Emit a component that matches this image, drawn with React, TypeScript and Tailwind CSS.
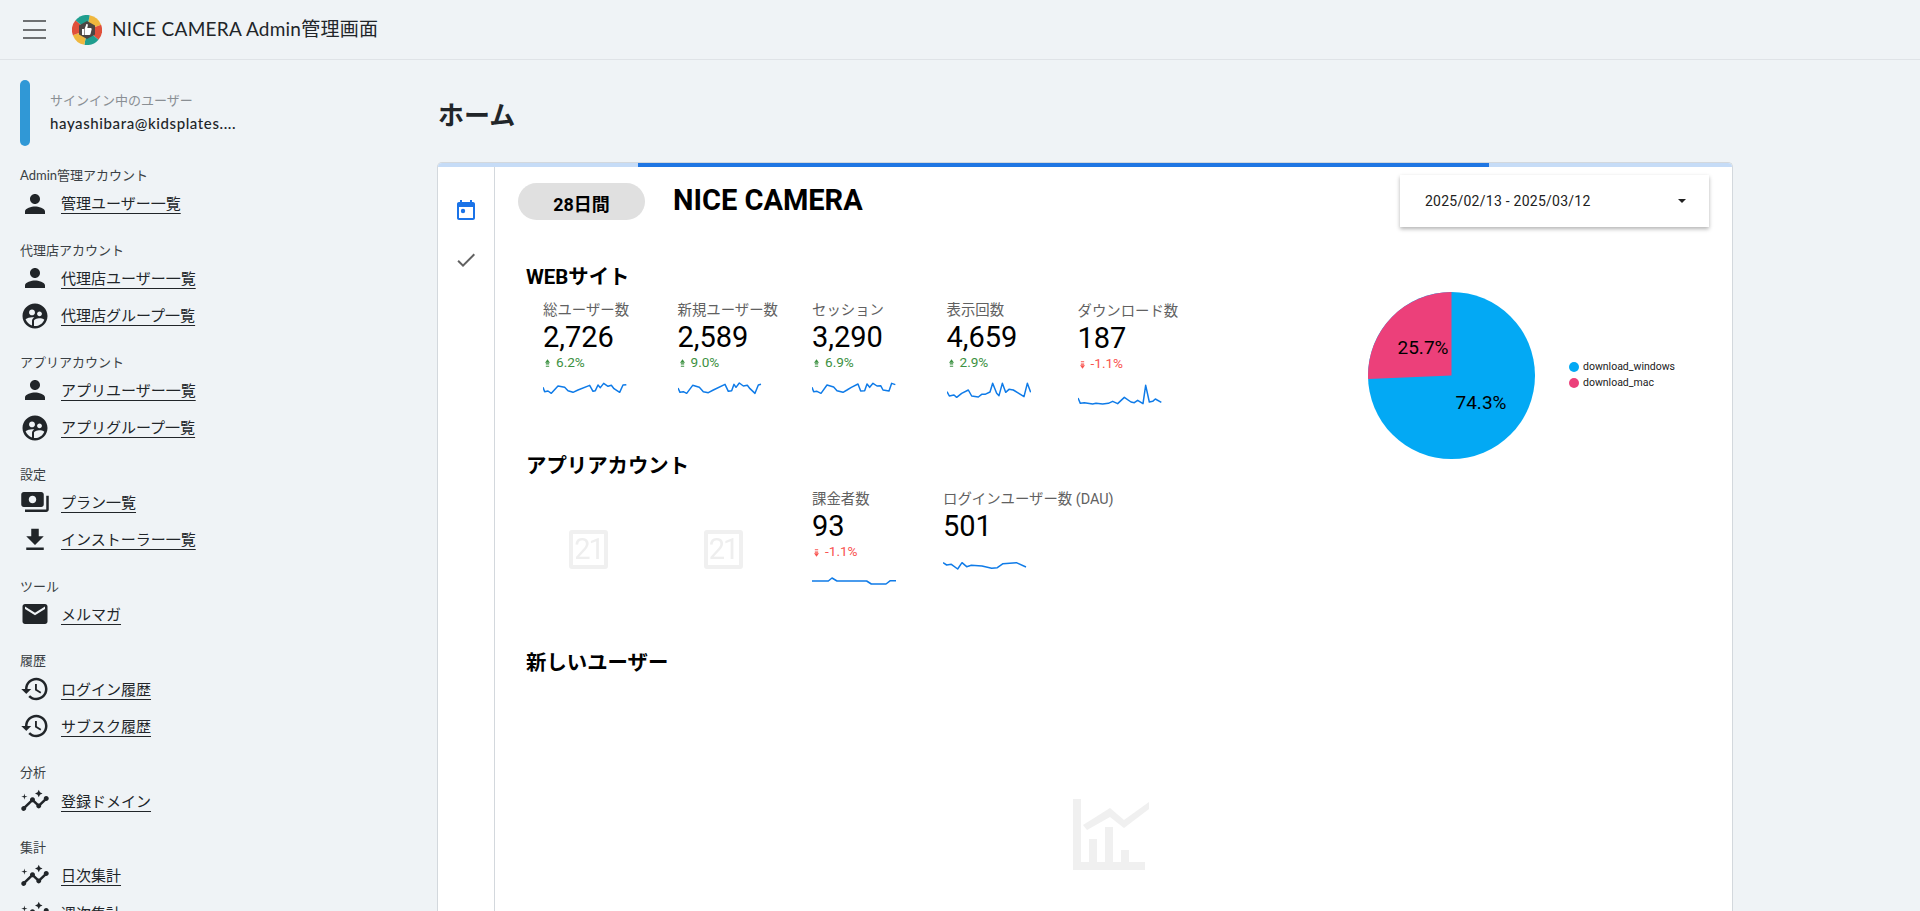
import React from "react";

const ICONS: Record<string, string> = {
  person:
    "M12 12c2.21 0 4-1.79 4-4s-1.79-4-4-4-4 1.79-4 4 1.79 4 4 4zm0 2c-2.67 0-8 1.34-8 4v2h16v-2c0-2.66-5.33-4-8-4z",
  group:
    "M12 2C6.48 2 2 6.48 2 12s4.48 10 10 10 10-4.48 10-10S17.52 2 12 2zm3.61 6.34c1.07 0 1.93.86 1.93 1.93 0 1.07-.86 1.93-1.93 1.93-1.07 0-1.93-.86-1.93-1.93-.01-1.07.86-1.93 1.93-1.93zm-6-1.58c1.3 0 2.36 1.06 2.36 2.36 0 1.3-1.06 2.36-2.36 2.36s-2.36-1.06-2.36-2.36c0-1.31 1.05-2.36 2.36-2.36zm0 9.13v3.75c-2.4-.75-4.3-2.6-5.14-4.96 1.05-1.12 3.67-1.69 5.14-1.69.53 0 1.2.08 1.9.22-1.64.87-1.9 2.02-1.9 2.68zM11.99 20c-.27 0-.53-.01-.79-.04v-4.07c0-1.42 2.94-2.13 4.4-2.13 1.07 0 2.92.39 3.84 1.15-1.17 2.97-4.06 5.09-7.45 5.09z",
  payments:
    "M19 14V6c0-1.1-.9-2-2-2H3c-1.1 0-2 .9-2 2v8c0 1.1.9 2 2 2h14c1.1 0 2-.9 2-2zm-9-1c-1.66 0-3-1.34-3-3s1.34-3 3-3 3 1.34 3 3-1.34 3-3 3zm13-6v11c0 1.1-.9 2-2 2H4v-2h17V7h2z",
  download: "M19 9h-4V3H9v6H5l7 7 7-7zM5 18v2h14v-2H5z",
  mail: "M20 4H4c-1.1 0-1.99.9-1.99 2L2 18c0 1.1.9 2 2 2h16c1.1 0 2-.9 2-2V6c0-1.1-.9-2-2-2zm0 4l-8 5-8-5V6l8 5 8-5v2z",
  history:
    "M13 3c-4.97 0-9 4.03-9 9H1l3.89 3.89.07.14L9 12H6c0-3.87 3.13-7 7-7s7 3.13 7 7-3.13 7-7 7c-1.93 0-3.68-.79-4.94-2.06l-1.42 1.42C8.27 19.99 10.51 21 13 21c4.97 0 9-4.03 9-9s-4.03-9-9-9zm-1 5v5l4.28 2.54.72-1.21-3.5-2.08V8H12z",
  insights:
    "M21 8c-1.45 0-2.26 1.44-1.93 2.51l-3.55 3.56c-.3-.09-.74-.09-1.04 0l-2.55-2.55C12.27 10.45 11.46 9 10 9c-1.45 0-2.27 1.44-1.93 2.52l-4.56 4.55C2.44 15.74 1 16.55 1 18c0 1.1.9 2 2 2 1.45 0 2.26-1.44 1.93-2.51l4.55-4.56c.3.09.74.09 1.04 0l2.55 2.55C12.73 16.55 13.54 18 15 18c1.45 0 2.27-1.44 1.93-2.52l3.56-3.55c1.07.33 2.51-.48 2.51-1.93 0-1.1-.9-2-2-2zM15 9l.94-2.07L18 6l-2.06-.93L15 3l-.92 2.07L12 6l2.08.93zM3.5 11L4 9l2-.5L4 8l-.5-2L3 8l-2 .5L3 9z",
};

const MENU = [
  { title: "Admin管理アカウント", items: [{ icon: "person", label: "管理ユーザー一覧" }] },
  {
    title: "代理店アカウント",
    items: [
      { icon: "person", label: "代理店ユーザー一覧" },
      { icon: "group", label: "代理店グループ一覧" },
    ],
  },
  {
    title: "アプリアカウント",
    items: [
      { icon: "person", label: "アプリユーザー一覧" },
      { icon: "group", label: "アプリグループ一覧" },
    ],
  },
  {
    title: "設定",
    items: [
      { icon: "payments", label: "プラン一覧" },
      { icon: "download", label: "インストーラー一覧" },
    ],
  },
  { title: "ツール", items: [{ icon: "mail", label: "メルマガ" }] },
  {
    title: "履歴",
    items: [
      { icon: "history", label: "ログイン履歴" },
      { icon: "history", label: "サブスク履歴" },
    ],
  },
  { title: "分析", items: [{ icon: "insights", label: "登録ドメイン" }] },
  {
    title: "集計",
    items: [
      { icon: "insights", label: "日次集計" },
      { icon: "insights", label: "週次集計" },
    ],
  },
];

// sparkline points, in 1/3 px units (viewBox 252x90)
const SPARK = {
  users:
    "0,37 5,50 15,48 25,55 45,33 65,37 75,47 90,52 105,45 140,31 150,49 157,47 165,30 172,38 182,25 195,34 205,31 213,41 230,52 240,30 250,29",
  newUsers:
    "0,39 6,52 16,50 26,55 44,31 64,37 76,50 91,53 106,45 141,28 151,49 161,47 168,28 174,37 184,24 196,33 208,31 216,41 231,55 241,30 249,28",
  sessions:
    "0,37 5,50 15,49 27,55 45,30 65,36 75,47 93,52 105,45 118,37 138,27 146,48 158,47 165,27 173,37 183,25 195,33 206,32 213,45 231,48 239,25 250,29",
  views:
    "0,50 7,63 21,60 29,67 44,55 64,45 74,63 94,66 104,58 114,58 129,51 137,25 149,55 156,62 166,25 176,52 186,43 199,45 231,65 241,25 251,52",
  downloads:
    "0,66 7,82 19,80 44,84 54,82 74,84 91,82 104,76 119,83 139,64 159,78 169,80 179,73 195,83 203,28 214,78 224,76 232,69 250,79",
  paid: "0,51 49,51 60,42 75,51 164,51 178,60 222,60 235,50 252,50",
  dau: "0,44 11,51 25,49 44,63 57,44 71,56 85,52 117,54 146,61 163,59 180,47 220,44 249,57",
};

const NavIcon = ({ name }: { name: string }) => (
  <svg viewBox="0 0 24 24" className="h-[30px] w-[30px] shrink-0 fill-[#212529]">
    <path d={ICONS[name]} />
  </svg>
);

const Logo = () => {
  const colors = ["#efb73e", "#e0503b", "#1f9e8f", "#efb73e", "#e0503b", "#1f9e8f"];
  const wedge = (i: number) => {
    const a = ((-80 + i * 60) * Math.PI) / 180;
    const b = ((-20 + i * 60) * Math.PI) / 180;
    return `M15 15L${15 + 15 * Math.cos(a)} ${15 + 15 * Math.sin(a)}A15 15 0 0 1 ${15 + 15 * Math.cos(b)} ${15 + 15 * Math.sin(b)}Z`;
  };
  return (
    <svg viewBox="0 0 30 30" className="h-[30px] w-[30px] shrink-0">
      {colors.map((c, i) => (
        <path key={i} d={wedge(i)} fill={c} />
      ))}
      <polygon points="15,6 23,10.5 23,19.5 15,24 7,19.5 7,10.5" fill="#4b4644" />
      <path
        d="M10 14h2v6h-2zM12.6 14l1.8-5c.9-.4 1.7.3 1.4 1.4l-.5 2.6h3.2c.9 0 1.3.7 1.1 1.4l-1.1 4.7c-.2.6-.6.9-1.2.9h-4.7z"
        fill="#ffffff"
      />
    </svg>
  );
};

const Spark = ({ points }: { points: string }) => (
  <svg viewBox="0 0 252 90" className="mt-[5px] h-[30px] w-[84px]">
    <polyline points={points} fill="none" stroke="#0f7be8" strokeWidth="4.5" strokeLinejoin="round" />
  </svg>
);

const Delta = ({ value, up }: { value: string; up: boolean }) => (
  <div className={`flex h-4 items-center gap-[6px] text-[13.6px] ${up ? "text-[#3d9142]" : "text-[#f9534f]"}`}>
    <svg viewBox="0 0 6 10" className="mt-[2px] ml-[2px] h-[9px] w-[5px] fill-current">
      {up ? (
        <path d="M3 0l3 4H0zM1 4.6h4v1H1zM1 6.2h4v1H1zM1 7.9h4v1H1z" />
      ) : (
        <path d="M3 10l3-4H0zM1 5.4h4v-1H1zM1 3.8h4v-1H1zM1 2.1h4v-1H1z" />
      )}
    </svg>
    {value}
  </div>
);

const Metric = ({
  label,
  value,
  delta,
  up,
  points,
  className,
}: {
  label: string;
  value: string;
  delta?: string;
  up?: boolean;
  points: string;
  className: string;
}) => (
  <div className={className}>
    <div className="h-5 text-[14.4px] leading-[22px] whitespace-nowrap text-[#616161]">{label}</div>
    <div className="h-[34px] text-[29px] leading-[34px] text-black">{value}</div>
    {delta && <Delta value={delta} up={!!up} />}
    <Spark points={points} />
  </div>
);

const CalendarSkeleton = () => (
  <div className="w-[134.5px]">
    <div className="mt-[41px] ml-[26px] flex h-[39px] w-[39px] items-center justify-center rounded-[3px] border-4 border-[#f0f0f0] text-[29px] tracking-[-2px] text-[#eeeeee] blur-[0.6px]">
      21
    </div>
  </div>
);

const Section = ({ children, className }: { children: React.ReactNode; className: string }) => (
  <h2 className={`h-7 text-[20.4px] leading-7 font-bold text-black ${className}`}>{children}</h2>
);

const App = () => {
  return (
    <div className="flex h-screen flex-col overflow-hidden bg-[#eff3f6] font-['Lato','Noto_Sans_CJK_JP',sans-serif] text-[#212529]">
      {/* ヘッダー */}
      <header className="flex h-[60px] shrink-0 items-center border-b border-[#dfe3e7] pl-[23px]">
        <div className="flex w-[23px] flex-col gap-[6.5px]">
          <span className="h-[2px] bg-[#6e7072]" />
          <span className="h-[2px] bg-[#6e7072]" />
          <span className="h-[2px] bg-[#6e7072]" />
        </div>
        <div className="ml-[26px]">
          <Logo />
        </div>
        <span className="ml-[10px] text-[19px] tracking-[0.25px] whitespace-nowrap text-[#212529]">
          NICE CAMERA Admin管理画面
        </span>
      </header>

      <div className="flex min-h-0 flex-1">
        {/* サイドバー */}
        <aside className="w-[437px] shrink-0 overflow-hidden pt-5 pl-5">
          <div className="flex h-[66px] items-stretch">
            <div className="w-[10px] rounded-[5px] bg-[#3098d6]" />
            <div className="ml-5 pt-[11px]">
              <div className="h-[18px] text-[13px] leading-[18px] text-[#8a8f94]">サインイン中のユーザー</div>
              <div className="mt-[4px] h-5 text-[15px] leading-5 font-medium tracking-[0.6px] text-[#212529]">
                hayashibara@kidsplates....
              </div>
            </div>
          </div>
          <nav className="mt-[19px]">
            {MENU.map((section) => (
              <div key={section.title} className="pb-[17.33px]">
                <div className="h-5 text-[13px] leading-5 text-[#3a3f44]">{section.title}</div>
                {section.items.map((item) => (
                  <a key={item.label} href="#" className="flex h-[37.33px] items-center">
                    <NavIcon name={item.icon} />
                    <span className="ml-[11px] text-[15px] underline underline-offset-[4px]">{item.label}</span>
                  </a>
                ))}
              </div>
            ))}
          </nav>
        </aside>

        {/* メイン */}
        <main className="flex min-w-0 flex-1 flex-col pt-[35px] pr-[187px] font-['Roboto','Noto_Sans_CJK_JP',sans-serif]">
          <h1 className="ml-px h-10 text-[26px] leading-[42px] font-bold text-[#212529]">ホーム</h1>
          <div className="mt-[27px] flex-1 overflow-hidden rounded-t-[5px] border-x border-t border-[#d3d8dd] bg-white">
            <div className="h-1 bg-[#c6dcf7] px-[200px]">
              <div className="h-1 w-[851px] bg-[#1f76e3]" />
            </div>
            <div className="flex h-full">
              {/* 左のレール */}
              <div className="flex w-[57px] shrink-0 flex-col items-center gap-[25px] border-r border-[#d3d8dd] pt-[32px]">
                <svg viewBox="0 0 24 24" className="h-6 w-6 fill-[#1a73e8]">
                  <path d="M19 3h-1V1h-2v2H8V1H6v2H5c-1.11 0-1.99.9-1.99 2L3 19c0 1.1.89 2 2 2h14c1.1 0 2-.9 2-2V5c0-1.1-.9-2-2-2zm0 16H5V8h14v11z" />
                  <circle cx="9" cy="12" r="2.2" />
                </svg>
                <svg viewBox="0 0 24 24" className="h-6 w-6 fill-[#616161]">
                  <path d="M9 16.17L4.83 12l-1.42 1.41L9 19 21 7l-1.41-1.41z" />
                </svg>
              </div>

              <div className="min-w-0 flex-1">
                {/* 上部 */}
                <div className="flex items-start pt-2 pr-[23px] pl-[23px]">
                  <div className="mt-2 flex h-[37px] w-[127px] items-center justify-center rounded-full bg-[#e0e0e0] pt-[5px] text-[18px] font-bold text-black">
                    28日間
                  </div>
                  <div className="mt-2 ml-7 text-[29px] leading-[34px] font-bold text-black">NICE CAMERA</div>
                  <div className="ml-auto flex h-[52px] w-[309px] items-center justify-between bg-white pr-[23px] pl-[25px] text-[14px] tracking-[0.25px] text-[#212121] shadow-[0_2px_4px_rgba(0,0,0,0.3)]">
                    2025/02/13 - 2025/03/12
                    <span className="h-0 w-0 border-x-4 border-t-4 border-x-transparent border-t-[#212121]" />
                  </div>
                </div>

                <div className="flex">
                  <div className="w-[800px] shrink-0">
                    <Section className="mt-9 ml-[31px]">WEBサイト</Section>
                    <div className="mt-[9px] ml-12 flex">
                      <Metric className="w-[134.5px]" label="総ユーザー数" value="2,726" delta="6.2%" up points={SPARK.users} />
                      <Metric className="w-[134.5px]" label="新規ユーザー数" value="2,589" delta="9.0%" up points={SPARK.newUsers} />
                      <Metric className="w-[134.5px]" label="セッション" value="3,290" delta="6.9%" up points={SPARK.sessions} />
                      <Metric className="w-[131px]" label="表示回数" value="4,659" delta="2.9%" up points={SPARK.views} />
                      <Metric className="pt-px" label="ダウンロード数" value="187" delta="-1.1%" points={SPARK.downloads} />
                    </div>

                    <Section className="mt-[46px] ml-[31px]">アプリアカウント</Section>
                    <div className="mt-[9px] ml-12 flex">
                      <CalendarSkeleton />
                      <CalendarSkeleton />
                      <Metric className="w-[131px]" label="課金者数" value="93" delta="-1.1%" points={SPARK.paid} />
                      <Metric className="" label="ログインユーザー数 (DAU)" value="501" points={SPARK.dau} />
                    </div>

                    <Section className="mt-[55px] ml-[31px]">新しいユーザー</Section>
                    <div className="mt-[122px] ml-[578px]">
                      <svg viewBox="0 0 80 76" className="h-[76px] w-[80px] fill-[#f0f0f0]">
                        <path d="M0 0h8v63h8V40h8v23h8V28h8v35h8V51h8v12h16v8H0z" />
                        <path d="M10 26l27-17 14 12 25-18v7L51 29 37 18 14 31z" />
                      </svg>
                    </div>
                  </div>

                  {/* 円グラフ */}
                  <div className="flex items-start pt-[65px]">
                    <svg viewBox="0 0 167 167" className="ml-[73px] h-[167px] w-[167px]">
                      <circle cx="83.5" cy="83.5" r="83.5" fill="#03a9f4" />
                      <path d="M83.5 83.5L83.5 0A83.5 83.5 0 0 0 .1 87.1Z" fill="#ec407a" />
                      <text x="55" y="62" textAnchor="middle" fontSize="19" fill="#000">25.7%</text>
                      <text x="113" y="117" textAnchor="middle" fontSize="19" fill="#000">74.3%</text>
                    </svg>
                    <div className="mt-[67px] ml-[34px] text-[10.5px] leading-4 text-[#212121]">
                      <div className="flex items-center gap-[4px]">
                        <span className="h-[10px] w-[10px] rounded-full bg-[#03a9f4]" />
                        download_windows
                      </div>
                      <div className="flex items-center gap-[4px]">
                        <span className="h-[10px] w-[10px] rounded-full bg-[#ec407a]" />
                        download_mac
                      </div>
                    </div>
                  </div>
                </div>
              </div>
            </div>
          </div>
        </main>
      </div>
    </div>
  );
};

export default App;
